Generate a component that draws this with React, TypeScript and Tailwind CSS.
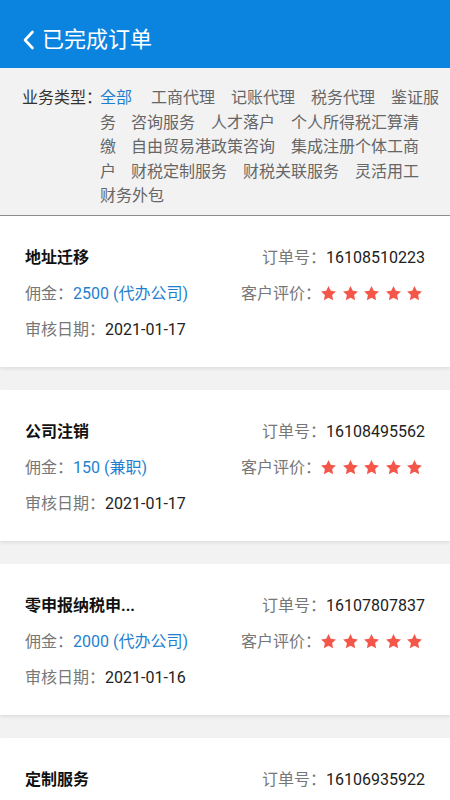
import React from "react";

const Star = () => (
  <svg width="17" height="17" viewBox="0 0 24 24">
    <path
      d="M12 1.5l3.2 6.7 7.3.9-5.4 5.1 1.4 7.3L12 18l-6.5 3.5 1.4-7.3-5.4-5.1 7.3-.9z"
      fill="#f4574a"
    />
  </svg>
);

type Order = {
  title: string;
  no: string;
  fee: string;
  date: string;
};

const orders: Order[] = [
  { title: "地址迁移", no: "16108510223", fee: "2500 (代办公司)", date: "2021-01-17" },
  { title: "公司注销", no: "16108495562", fee: "150 (兼职)", date: "2021-01-17" },
  { title: "零申报纳税申...", no: "16107807837", fee: "2000 (代办公司)", date: "2021-01-16" },
  { title: "定制服务", no: "16106935922", fee: "1000 (代办公司)", date: "2021-01-16" },
];

function Card({ o, first }: { o: Order; first: boolean }) {
  return (
    <div
      className={
        "bg-white px-[25px] pt-[30px] pb-[25px] shadow-[0_2px_3px_rgba(0,0,0,0.08)] flex flex-col gap-[12px] " +
        (first ? "" : "mt-[23px]")
      }
    >
      <div className="flex h-[24px] items-center justify-between">
        <span className="text-[16px] font-bold text-[#111]">{o.title}</span>
        <span className="text-[16px]">
          <span className="text-[#777]">订单号：</span>
          <span className="text-[#222]">{o.no}</span>
        </span>
      </div>
      <div className="flex h-[24px] items-center justify-between">
        <span className="text-[16px]">
          <span className="text-[#777]">佣金：</span>
          <span className="text-[#1f7fcf]">{o.fee}</span>
        </span>
        <span className="flex items-center text-[16px] pr-[2px]">
          <span className="text-[#777]">客户评价：</span>
          <span className="flex items-center gap-[4.5px] -ml-[1px]">
            <Star />
            <Star />
            <Star />
            <Star />
            <Star />
          </span>
        </span>
      </div>
      <div className="flex h-[24px] items-center">
        <span className="text-[16px]">
          <span className="text-[#777]">审核日期：</span>
          <span className="text-[#222]">{o.date}</span>
        </span>
      </div>
    </div>
  );
}

export default function App() {
  const tag = "mr-[16px] text-[#666]";
  return (
    <div
      className="w-[450px] h-[800px] overflow-hidden bg-[#f2f2f2]"
      style={{ fontFamily: 'Roboto, "Noto Sans CJK SC", sans-serif' }}
    >
      <div className="h-[68px] bg-[#0b84e0] flex items-center pl-[22px] pt-[11px]">
        <svg width="13" height="20" viewBox="0 0 13 20" className="mr-[7px]">
          <polyline
            points="10.5,2 3,10 10.5,18"
            fill="none"
            stroke="white"
            strokeWidth="2.6"
            strokeLinecap="round"
            strokeLinejoin="round"
          />
        </svg>
        <span className="text-white text-[22px] leading-none">已完成订单</span>
      </div>

      <div className="bg-[#f2f2f2] pt-[18px] pb-[6px] pl-[22px] border-b-[1.5px] border-[#8c8c8c] flex">
        <span className="text-[16px] leading-[24.6px] text-[#333] shrink-0 w-[78px] whitespace-nowrap">
          业务类型：
        </span>
        <div className="text-[16px] leading-[24.6px] w-[350px]">
          <span className="mr-[19px] text-[#1f7fcf]">全部</span>
          <span className={tag}>工商代理</span>
          <span className={tag}>记账代理</span>
          <span className={tag}>税务代理</span>
          <span className="text-[#666]">鉴证服</span>
          <br />
          <span className="mr-[15px] text-[#666]">务</span>
          <span className={tag}>咨询服务</span>
          <span className={tag}>人才落户</span>
          <span className="text-[#666]">个人所得税汇算清</span>
          <br />
          <span className="mr-[15px] text-[#666]">缴</span>
          <span className={tag}>自由贸易港政策咨询</span>
          <span className="text-[#666]">集成注册个体工商</span>
          <br />
          <span className="mr-[15px] text-[#666]">户</span>
          <span className={tag}>财税定制服务</span>
          <span className={tag}>财税关联服务</span>
          <span className="text-[#666]">灵活用工</span>
          <br />
          <span className="text-[#666]">财务外包</span>
        </div>
      </div>

      <div className="flex flex-col">
        {orders.map((o, i) => (
          <Card key={i} o={o} first={i === 0} />
        ))}
      </div>
    </div>
  );
}
